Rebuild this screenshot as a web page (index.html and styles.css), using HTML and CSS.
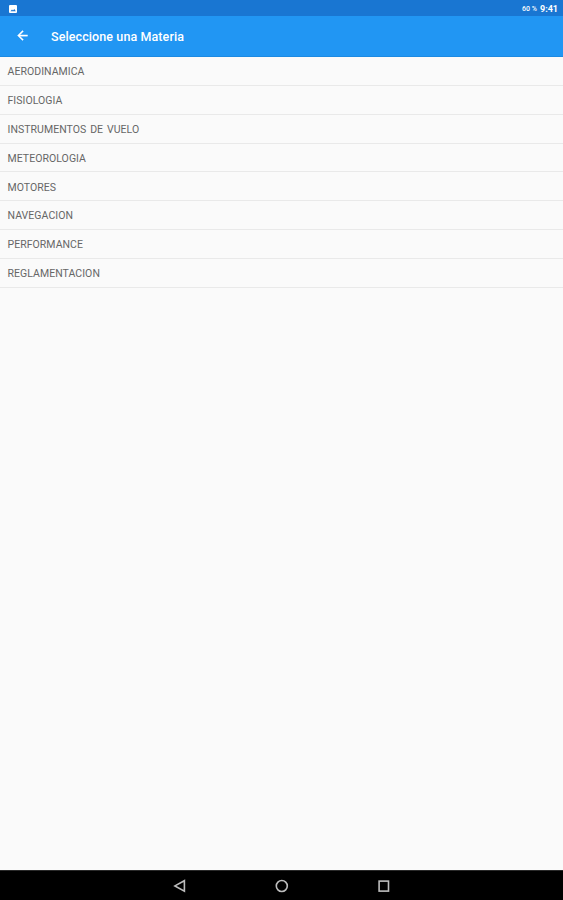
FILE: index.html
```html
<!DOCTYPE html>
<html lang="es">
<head>
    <meta charset="UTF-8">
    <meta name="viewport" content="width=device-width, initial-scale=1.0">
    <title>Seleccione una Materia</title>
    <link rel="stylesheet" href="styles.css">
</head>
<body>
<div class="status-bar">
    <svg class="picture-icon" viewBox="0 0 8 8">
        <rect width="8" height="8" rx="1" fill="#fff"/>
        <path d="M1.5 6.3 3 4.5l1 1 1.3-1.6 1.5 2.4z" fill="#1976d2"/>
    </svg>
    <div class="status-right">
        <span class="battery">60 %</span>
        <span class="clock">9:41</span>
    </div>
</div>
<header class="toolbar">
    <svg class="back-icon" viewBox="0 0 24 24">
        <path d="M20 11H7.83l5.59-5.59L12 4l-8 8 8 8 1.41-1.41L7.83 13H20v-2z"/>
    </svg>
    <h1>Seleccione una Materia</h1>
</header>
<ul class="subjects">
    <li>AERODINAMICA</li>
    <li>FISIOLOGIA</li>
    <li>INSTRUMENTOS DE VUELO</li>
    <li>METEOROLOGIA</li>
    <li>MOTORES</li>
    <li>NAVEGACION</li>
    <li>PERFORMANCE</li>
    <li>REGLAMENTACION</li>
</ul>
<nav class="nav-bar">
    <svg viewBox="0 0 14 14">
        <path d="M11.4 1.7v10.4L1.9 6.9z"/>
    </svg>
    <svg viewBox="0 0 14 14">
        <circle cx="6.8" cy="7" r="5.5"/>
    </svg>
    <svg viewBox="0 0 14 14">
        <rect x="2.1" y="2.1" width="9.4" height="10"/>
    </svg>
</nav>
</body>
</html>
```
FILE: styles.css
```css
* {
    box-sizing: border-box;
}
body {
    margin: 0;
    height: 100vh;
    display: flex;
    flex-direction: column;
    font-family: Roboto, sans-serif;
    background-color: #fafafa;
    overflow: hidden;
}
.status-bar {
    height: 16px;
    display: flex;
    align-items: center;
    justify-content: space-between;
    padding: 1px 5px 0 9px;
    background-color: #1976d2;
    color: #fff;
}
.picture-icon {
    width: 8px;
    height: 8px;
}
.status-right {
    display: flex;
    align-items: center;
    gap: 3px;
}
.battery {
    font-size: 7px;
    font-weight: 500;
}
.clock {
    font-size: 9px;
    font-weight: 700;
}
.toolbar {
    height: 41px;
    display: flex;
    align-items: center;
    padding: 0 15px;
    background-color: #2196f3;
    border-bottom: 1px solid #1c8ae2;
    color: #fff;
}
.back-icon {
    width: 15px;
    height: 15px;
    margin-bottom: 2px;
    fill: #fff;
    stroke: #fff;
    stroke-width: 0.6;
}
h1 {
    margin: 1px 0 0 21px;
    font-size: 12.5px;
    font-weight: 500;
    letter-spacing: 0.1px;
}
.subjects {
    flex: 1;
    margin: 0;
    padding: 0;
    list-style: none;
}
.subjects li {
    height: 28.85px;
    display: flex;
    align-items: center;
    padding: 1.5px 7.5px 0;
    font-size: 10.5px;
    letter-spacing: 0.05px;
    word-spacing: 1.2px;
    color: #666;
    border-bottom: 1px solid #e9e9e9;
}
.nav-bar {
    height: 30px;
    display: flex;
    align-items: center;
    justify-content: center;
    gap: 88px;
    background-color: #000;
    border-top: 1px solid #2a2a2a;
}
.nav-bar svg {
    width: 14px;
    height: 14px;
    fill: none;
    stroke: #bdbdbd;
    stroke-width: 1.6;
}
```
